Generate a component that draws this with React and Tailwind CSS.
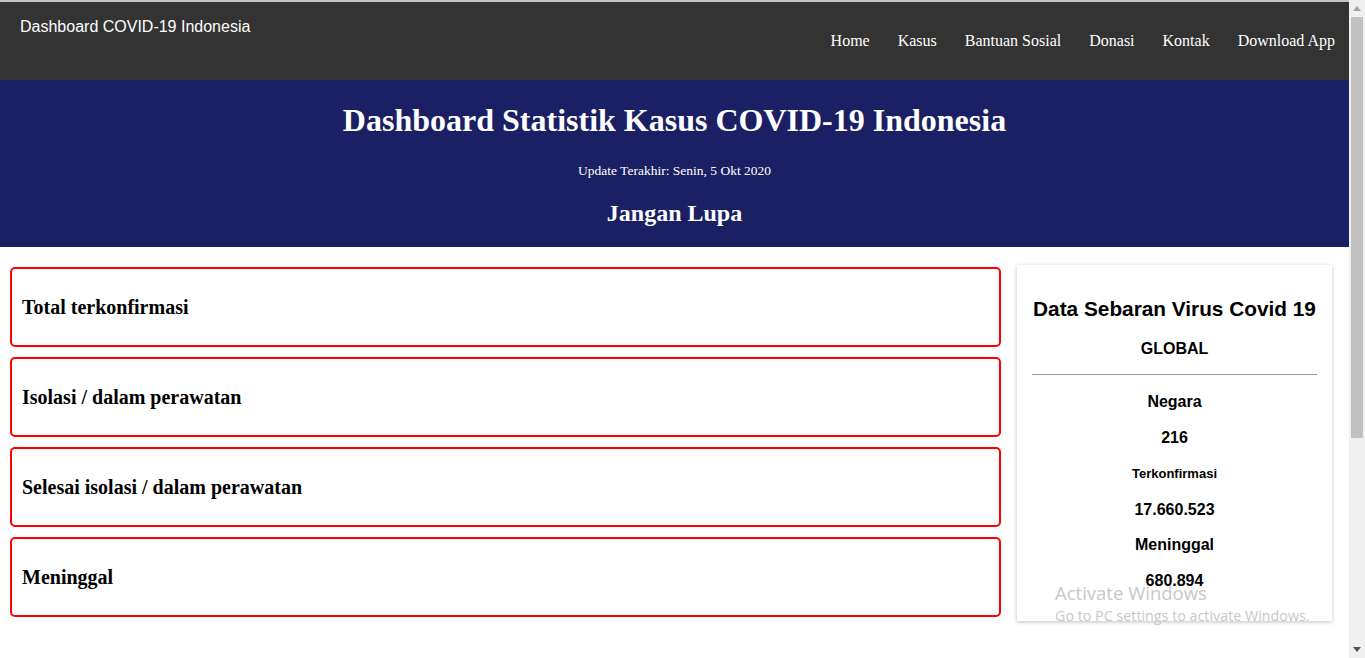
export default function App() {
  const cards = [
    "Total terkonfirmasi",
    "Isolasi / dalam perawatan",
    "Selesai isolasi / dalam perawatan",
    "Meninggal",
  ];
  const serif = { fontFamily: '"Liberation Serif", "Times New Roman", serif' };
  const sans = { fontFamily: '"Liberation Sans", Arial, sans-serif' };
  return (
    <div className="relative flex h-[658px] w-[1365px] overflow-hidden bg-white">
      <div className="flex min-w-0 flex-1 flex-col">
        <div className="h-[2px] bg-[#c4c4c4]" />
        <header className="flex h-[78px] items-start justify-between bg-[#333333] pl-[20px] pr-[14px]">
          <div className="mt-[16px] text-[16px] leading-[18px] text-white" style={sans}>
            Dashboard COVID-19 Indonesia
          </div>
          <nav className="mt-[30px] flex gap-[28px] text-[16px] leading-[18px] text-white" style={serif}>
            <span>Home</span>
            <span>Kasus</span>
            <span>Bantuan Sosial</span>
            <span>Donasi</span>
            <span>Kontak</span>
            <span>Download App</span>
          </nav>
        </header>
        <section className="flex h-[167px] flex-col items-center bg-[#1b1f63] text-white" style={serif}>
          <h1 className="mt-[22px] text-[32px] font-bold leading-[37px]">
            Dashboard Statistik Kasus COVID-19 Indonesia
          </h1>
          <p className="mt-[24px] text-[13.5px] leading-[15px]">Update Terakhir: Senin, 5 Okt 2020</p>
          <h2 className="mt-[21px] text-[24px] font-bold leading-[28px]">Jangan Lupa</h2>
        </section>
        <main className="flex gap-[16px] pl-[10px] pr-[17px] pt-[18px]">
          <div className="flex flex-1 flex-col gap-[10px] pt-[2px]">
            {cards.map((c) => (
              <div
                key={c}
                className="flex h-[80px] items-center rounded-[5px] border-2 border-[#ff0000] px-[10px]"
              >
                <span className="text-[20px] font-bold text-black" style={serif}>
                  {c}
                </span>
              </div>
            ))}
          </div>
          <aside
            className="flex h-[356px] w-[315px] flex-col items-center bg-white px-[15px] text-black shadow-[0_1px_4px_rgba(0,0,0,0.25)]"
            style={sans}
          >
            <h3 className="mt-[31px] whitespace-nowrap text-[20.8px] font-bold leading-[25px]">Data Sebaran Virus Covid 19</h3>
            <p className="mt-[19px] text-[16px] font-bold leading-[18px]">GLOBAL</p>
            <div className="mt-[16px] h-px w-full bg-[#999999]" />
            <p className="mt-[18px] text-[16px] font-bold leading-[18px]">Negara</p>
            <p className="mt-[18px] text-[16px] font-bold leading-[18px]">216</p>
            <p className="mt-[19px] text-[13px] font-bold leading-[15px]">Terkonfirmasi</p>
            <p className="mt-[20px] text-[16px] font-bold leading-[18px]">17.660.523</p>
            <p className="mt-[17px] text-[16px] font-bold leading-[18px]">Meninggal</p>
            <p className="mt-[18px] text-[16px] font-bold leading-[18px]">680.894</p>
          </aside>
        </main>
      </div>
      <div className="flex w-[16px] flex-col bg-[#f0f0f0]">
        <div className="flex h-[17px] items-center justify-center">
          <svg width="8" height="5" viewBox="0 0 8 5"><path d="M0 5 L4 0 L8 5 Z" fill="#a3a3a3" /></svg>
        </div>
        <div className="mx-[2px] h-[421px] bg-[#c1c1c1]" />
        <div className="flex-1" />
        <div className="flex h-[17px] items-center justify-center">
          <svg width="8" height="5" viewBox="0 0 8 5"><path d="M0 0 L8 0 L4 5 Z" fill="#505050" /></svg>
        </div>
      </div>
      <div className="pointer-events-none absolute left-[1055px] top-[580px] text-[#c8c8c8]" style={{ fontFamily: '"Open Sans", "Noto Sans", sans-serif' }}>
        <div className="text-[18.5px] leading-[26px]">Activate Windows</div>
        <div className="text-[14.3px] leading-[20px]">Go to PC settings to activate Windows.</div>
      </div>
    </div>
  );
}
